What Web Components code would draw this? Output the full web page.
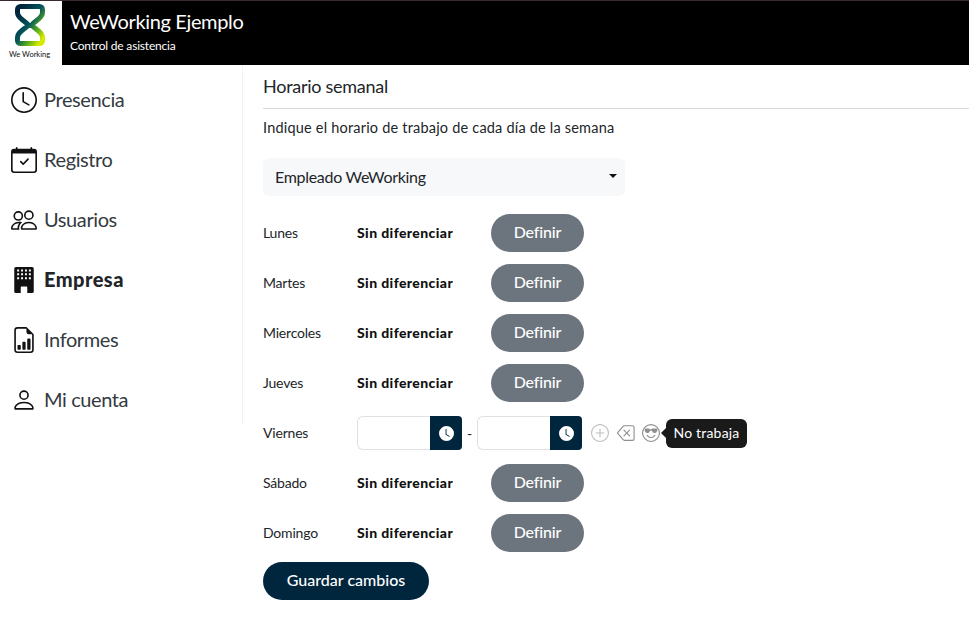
<!DOCTYPE html>
<html lang="es">
<head>
<meta charset="utf-8">
<title>WeWorking</title>
<style>
  html, body { margin: 0; padding: 0; background: #fff; }
  body { font-family: Lato, "Open Sans", sans-serif; color: #212529; }
</style>
</head>
<body>
<app-shell>
  <app-header slot="header" title="WeWorking Ejemplo" subtitle="Control de asistencia"></app-header>
  <side-nav slot="nav">
    <nav-item icon="clock">Presencia</nav-item>
    <nav-item icon="calendar">Registro</nav-item>
    <nav-item icon="people">Usuarios</nav-item>
    <nav-item icon="building" active>Empresa</nav-item>
    <nav-item icon="report">Informes</nav-item>
    <nav-item icon="person">Mi cuenta</nav-item>
  </side-nav>
  <schedule-panel>
    <day-row day="Lunes"></day-row>
    <day-row day="Martes"></day-row>
    <day-row day="Miercoles"></day-row>
    <day-row day="Jueves"></day-row>
    <day-row day="Viernes" editing></day-row>
    <day-row day="Sábado"></day-row>
    <day-row day="Domingo"></day-row>
  </schedule-panel>
</app-shell>
<script>
const ICONS = {
  clock: '<path d="M8 3.5a.5.5 0 0 0-1 0V9a.5.5 0 0 0 .252.434l3.5 2a.5.5 0 0 0 .496-.868L8 8.71z"/><path d="M8 16A8 8 0 1 0 8 0a8 8 0 0 0 0 16m7-8A7 7 0 1 1 1 8a7 7 0 0 1 14 0"/>',
  calendar: '<path d="M10.854 7.146a.5.5 0 0 1 0 .708l-3 3a.5.5 0 0 1-.708 0l-1.5-1.5a.5.5 0 1 1 .708-.708L7.5 9.793l2.646-2.647a.5.5 0 0 1 .708 0z"/><path d="M3.5 0a.5.5 0 0 1 .5.5V1h8V.5a.5.5 0 0 1 1 0V1h1a2 2 0 0 1 2 2v11a2 2 0 0 1-2 2H2a2 2 0 0 1-2-2V3a2 2 0 0 1 2-2h1V.5a.5.5 0 0 1 .5-.5zM1 4v10a1 1 0 0 0 1 1h12a1 1 0 0 0 1-1V4H1z"/>',
  people: '<path d="M15 14s1 0 1-1-1-4-5-4-5 3-5 4 1 1 1 1zm-7.978-1A.261.261 0 0 1 7 12.996c.001-.264.167-1.03.76-1.72C8.312 10.629 9.282 10 11 10c1.717 0 2.687.63 3.24 1.276.593.69.758 1.457.76 1.72l-.008.002a.274.274 0 0 1-.014.002H7.022zM11 7a2 2 0 1 0 0-4 2 2 0 0 0 0 4zm3-2a3 3 0 1 1-6 0 3 3 0 0 1 6 0zM6.936 9.28a5.88 5.88 0 0 0-1.23-.247A7.35 7.35 0 0 0 5 9c-4 0-5 3-5 4 0 .667.333 1 1 1h4.216A2.238 2.238 0 0 1 5 13c0-1.01.377-2.042 1.09-2.904.243-.294.526-.569.846-.816zM4.92 10A5.493 5.493 0 0 0 4 13H1c0-.26.164-1.03.76-1.724.545-.636 1.492-1.256 3.16-1.275zM1.5 5.5a3 3 0 1 1 6 0 3 3 0 0 1-6 0zm3-2a2 2 0 1 0 0 4 2 2 0 0 0 0-4z"/>',
  building: '<path fill-rule="evenodd" d="M3 0a1 1 0 0 0-1 1v14a1 1 0 0 0 1 1h3v-3.5a.5.5 0 0 1 .5-.5h3a.5.5 0 0 1 .5.5V16h3a1 1 0 0 0 1-1V1a1 1 0 0 0-1-1zM3.800 1.500h1.200v1.200H3.800zm2.400 0h1.200v1.200H6.200zm2.400 0h1.200v1.200H8.600zm2.400 0h1.200v1.200H11zM3.800 3.900h1.200v1.200H3.800zm2.400 0h1.200v1.200H6.200zm2.400 0h1.200v1.200H8.600zm2.400 0h1.200v1.200H11zM3.800 6.300h1.200v1.200H3.800zm2.400 0h1.200v1.200H6.200zm2.400 0h1.200v1.200H8.600zm2.400 0h1.200v1.200H11z"/>',
  report: '<path d="M10 13.5a.5.5 0 0 0 .5.5h1a.5.5 0 0 0 .5-.5v-6a.5.5 0 0 0-.5-.5h-1a.5.5 0 0 0-.5.5zm-2.5.5a.5.5 0 0 1-.5-.5v-4a.5.5 0 0 1 .5-.5h1a.5.5 0 0 1 .5.5v4a.5.5 0 0 1-.5.5zm-3 0a.5.5 0 0 1-.5-.5v-2a.5.5 0 0 1 .5-.5h1a.5.5 0 0 1 .5.5v2a.5.5 0 0 1-.5.5z"/><path d="M14 14V4.5L9.5 0H4a2 2 0 0 0-2 2v12a2 2 0 0 0 2 2h8a2 2 0 0 0 2-2M9.5 3A1.5 1.5 0 0 0 11 4.5h2V14a1 1 0 0 1-1 1H4a1 1 0 0 1-1-1V2a1 1 0 0 1 1-1h5.5z"/>',
  person: '<path d="M8 8a3 3 0 1 0 0-6 3 3 0 0 0 0 6m2-3a2 2 0 1 1-4 0 2 2 0 0 1 4 0m4 8c0 1-1 1-1 1H3s-1 0-1-1 1-4 6-4 6 3 6 4m-1-.004c-.001-.246-.154-.986-.832-1.664C11.516 10.68 10.289 10 8 10s-3.516.68-4.168 1.332c-.678.678-.83 1.418-.832 1.664z"/>',
  clockFill: '<path d="M16 8A8 8 0 1 1 0 8a8 8 0 0 1 16 0M8 3.5a.5.5 0 0 0-1 0V9a.5.5 0 0 0 .252.434l3.5 2a.5.5 0 0 0 .496-.868L8 8.71z"/>',
  plus: '<path d="M8 15A7 7 0 1 1 8 1a7 7 0 0 1 0 14m0 1A8 8 0 1 0 8 0a8 8 0 0 0 0 16"/><path d="M8 4a.5.5 0 0 1 .5.5v3h3a.5.5 0 0 1 0 1h-3v3a.5.5 0 0 1-1 0v-3h-3a.5.5 0 0 1 0-1h3v-3A.5.5 0 0 1 8 4"/>',
  backspace: '<path d="M5.83 5.146a.5.5 0 0 0 0 .708L7.975 8l-2.147 2.146a.5.5 0 0 0 .707.708l2.147-2.147 2.146 2.147a.5.5 0 0 0 .707-.708L9.39 8l2.146-2.146a.5.5 0 0 0-.707-.708L8.683 7.293 6.536 5.146a.5.5 0 0 0-.707 0z"/><path d="M13.683 1a2 2 0 0 1 2 2v10a2 2 0 0 1-2 2h-7.08a2 2 0 0 1-1.519-.698L.241 8.65a1 1 0 0 1 0-1.302L5.084 1.7A2 2 0 0 1 6.603 1h7.08zm-7.08 1a1 1 0 0 0-.76.35L1 8l4.844 5.65a1 1 0 0 0 .759.35h7.08a1 1 0 0 0 1-1V3a1 1 0 0 0-1-1h-7.08z"/>',
  sunglasses: '<path d="M4.968 9.75a.5.5 0 1 0-.866.5A4.498 4.498 0 0 0 8 12.5a4.5 4.5 0 0 0 3.898-2.25.5.5 0 1 0-.866-.5A3.498 3.498 0 0 1 8 11.5a3.498 3.498 0 0 1-3.032-1.75zM7 5.116V5a1 1 0 0 0-1-1H3.28a1 1 0 0 0-.97 1.243l.311 1.242A2 2 0 0 0 4.561 8H5a2 2 0 0 0 1.994-1.839A2.99 2.99 0 0 1 8 6c.393 0 .74.064 1.006.161A2 2 0 0 0 11 8h.438a2 2 0 0 0 1.94-1.515l.311-1.242A1 1 0 0 0 12.72 4H10a1 1 0 0 0-1 .116z"/><path d="M16 8A8 8 0 1 1 0 8a8 8 0 0 1 16 0zm-1 0A7 7 0 1 0 1 8a7 7 0 0 0 14 0z"/>'
};

function svgIcon(name, size) {
  return `<svg xmlns="http://www.w3.org/2000/svg" width="${size}" height="${size}" viewBox="0 0 16 16" fill="currentColor">${ICONS[name]}</svg>`;
}

class AppShell extends HTMLElement {
  connectedCallback() {
    this.attachShadow({ mode: 'open' });
    this.shadowRoot.innerHTML = `
      <style>
        :host { display: block; width: 969px; height: 630px; overflow: hidden; }
        .body { display: flex; align-items: flex-start; }
      </style>
      <slot name="header"></slot>
      <div class="body">
        <slot name="nav"></slot>
        <slot></slot>
      </div>
    `;
  }
}

class AppHeader extends HTMLElement {
  connectedCallback() {
    this.attachShadow({ mode: 'open' });
    this.shadowRoot.innerHTML = `
      <style>
        :host { display: flex; height: 65px; background: #000; color: #fff; box-sizing: border-box; border-top: 1px solid #3a2a2e; }
        .logo { width: 62px; background: #fff; display: flex; flex-direction: column; align-items: center; padding-top: 3px; box-sizing: border-box; color: #111; }
        .logo svg { margin-left: -3px; }
        .logo span { font: 7.500px/8px Lato, sans-serif; margin: 5px 0 0 -3px; white-space: nowrap; }
        .titles { padding: 8px 0 0 8px; }
        .title { font-size: 20px; line-height: 24px; letter-spacing: -.35px; }
        .sub { font-size: 12px; line-height: 14px; margin-top: 6px; letter-spacing: -.2px; }
      </style>
      <div class="logo">
        <svg width="30" height="42" viewBox="0 0 30 42">
          <defs>
            <linearGradient id="g" x1="0.1" y1="0.1" x2="0.9" y2="0.95">
              <stop offset="0" stop-color="#00263e"/>
              <stop offset=".45" stop-color="#04555c"/>
              <stop offset=".72" stop-color="#52a81e"/>
              <stop offset="1" stop-color="#d6ea00"/>
            </linearGradient>
          </defs>
          <path d="M5.500 2.500h19a3 3 0 0 1 3 3v3c0 3-2 5-4.500 7L18 19.500c-1.500 1-1.500 2 0 3l5 4c2.500 2 4.500 4 4.500 7v3a3 3 0 0 1-3 3h-19a3 3 0 0 1-3-3v-3c0-3 2-5 4.500-7l5-4c1.500-1 1.500-2 0-3l-5-4C4.500 13.500 2.500 11.500 2.500 8.500v-3a3 3 0 0 1 3-3z" fill="none" stroke="url(#g)" stroke-width="5" stroke-linejoin="round"/>
        </svg>
        <span>We Working</span>
      </div>
      <div class="titles">
        <div class="title">${this.getAttribute('title')}</div>
        <div class="sub">${this.getAttribute('subtitle')}</div>
      </div>
    `;
  }
}

class SideNav extends HTMLElement {
  connectedCallback() {
    this.attachShadow({ mode: 'open' });
    this.shadowRoot.innerHTML = `
      <style>
        :host { display: block; flex: none; width: 243px; height: 360px; box-sizing: border-box; padding-top: 5px; border-right: 1px solid #f0f1f2; }
      </style>
      <slot></slot>
    `;
  }
}

class NavItem extends HTMLElement {
  connectedCallback() {
    this.attachShadow({ mode: 'open' });
    this.shadowRoot.innerHTML = `
      <style>
        :host { display: flex; align-items: center; gap: 7px; height: 60px; padding-left: 11px; font-size: 20px; letter-spacing: -.4px; color: #343a40; }
        :host([active]) { font-weight: 900; letter-spacing: .45px; color: #212529; }
        .ico { display: flex; width: 26px; color: #111; }
        .txt { padding-bottom: 2px; }
      </style>
      <span class="ico">${svgIcon(this.getAttribute('icon'), 26)}</span>
      <span class="txt"><slot></slot></span>
    `;
  }
}

class SchedulePanel extends HTMLElement {
  connectedCallback() {
    this.attachShadow({ mode: 'open' });
    this.shadowRoot.innerHTML = `
      <style>
        :host { display: block; flex: 1; padding-left: 20px; color: #212529; }
        h1 { margin: 0; height: 43px; line-height: 43px; font-size: 18px; font-weight: 400; letter-spacing: -.27px; border-bottom: 1px solid #d8d8d8; }
        p { margin: 0; height: 40px; line-height: 37px; font-size: 14.500px; letter-spacing: .2px; }
        .select { display: flex; align-items: center; justify-content: space-between; width: 362px; height: 38px; margin: 9px 0 12px; padding: 0 8px 0 12px; box-sizing: border-box; background: #f7f8fa; border-radius: 6px; font-size: 16px; letter-spacing: -.3px; }
        .select span { padding-bottom: 2px; }
        .caret { width: 0; height: 0; border: 4px solid transparent; border-top-color: #111; border-bottom: 0; margin-top: -3px; }
        .save { display: block; height: 38px; width: 166px; margin-top: 4px; border: 0; border-radius: 19px; background: #00263e; color: #fff; font: 500 16px Lato, sans-serif; padding: 0 0 3px; }
      </style>
      <h1>Horario semanal</h1>
      <p>Indique el horario de trabajo de cada día de la semana</p>
      <div class="select"><span>Empleado WeWorking</span><i class="caret"></i></div>
      <slot></slot>
      <button class="save">Guardar cambios</button>
    `;
  }
}

class TimeInput extends HTMLElement {
  connectedCallback() {
    this.attachShadow({ mode: 'open' });
    this.shadowRoot.innerHTML = `
      <style>
        :host { display: flex; width: 105px; height: 34px; box-sizing: border-box; }
        .field { flex: 1; border: 1px solid #dee2e6; border-right: 0; border-radius: 6px 0 0 6px; }
        .btn { width: 32px; background: #00263e; color: #fff; border-radius: 0 4px 4px 0; display: flex; align-items: center; justify-content: center; }
      </style>
      <div class="field"></div>
      <div class="btn">${svgIcon('clockFill', 15)}</div>
    `;
  }
}

class DayRow extends HTMLElement {
  connectedCallback() {
    this.attachShadow({ mode: 'open' });
    const body = this.hasAttribute('editing') ? `
      <div class="edit">
        <time-input></time-input>
        <span class="dash">-</span>
        <time-input></time-input>
        <span class="acts">${svgIcon('plus', 18)}${svgIcon('backspace', 18)}${svgIcon('sunglasses', 18)}</span>
        <span class="tip">No trabaja</span>
      </div>` : `
      <span class="status">Sin diferenciar</span>
      <button class="def">Definir</button>`;
    this.shadowRoot.innerHTML = `
      <style>
        :host { display: flex; align-items: center; height: 50px; font-size: 14px; color: #212529; }
        .day { width: 94px; flex: none; padding-bottom: 2px; letter-spacing: -.2px; }
        .status { width: 134px; flex: none; font-weight: 900; color: #111; padding-bottom: 2px; letter-spacing: .4px; }
        .def { width: 93px; height: 38px; border: 0; border-radius: 19px; background: #6c757d; color: #fff; font: 500 16px Lato, sans-serif; letter-spacing: -.15px; padding: 0 0 4px; }
        .edit { display: flex; align-items: center; position: relative; }
        .dash { width: 15px; text-align: center; }
        .acts { display: flex; gap: 7.500px; margin-left: 9px; color: #8f8f8f; }
        .acts svg:first-child { color: #bdbdbd; }
        .tip { position: relative; margin-left: 6px; display: block; height: 29px; width: 81px; line-height: 27px; text-align: center; background: #1a1a1a; color: #fff; border-radius: 6px; font-size: 14px; letter-spacing: .2px; }
        .tip::before { content: ""; position: absolute; left: -5px; top: 9px; border: 5px solid transparent; border-left: 0; border-right-color: #1a1a1a; }
      </style>
      <span class="day">${this.getAttribute('day')}</span>
      ${body}
    `;
  }
}

customElements.define('app-shell', AppShell);
customElements.define('app-header', AppHeader);
customElements.define('side-nav', SideNav);
customElements.define('nav-item', NavItem);
customElements.define('schedule-panel', SchedulePanel);
customElements.define('time-input', TimeInput);
customElements.define('day-row', DayRow);
</script>
</body>
</html>
